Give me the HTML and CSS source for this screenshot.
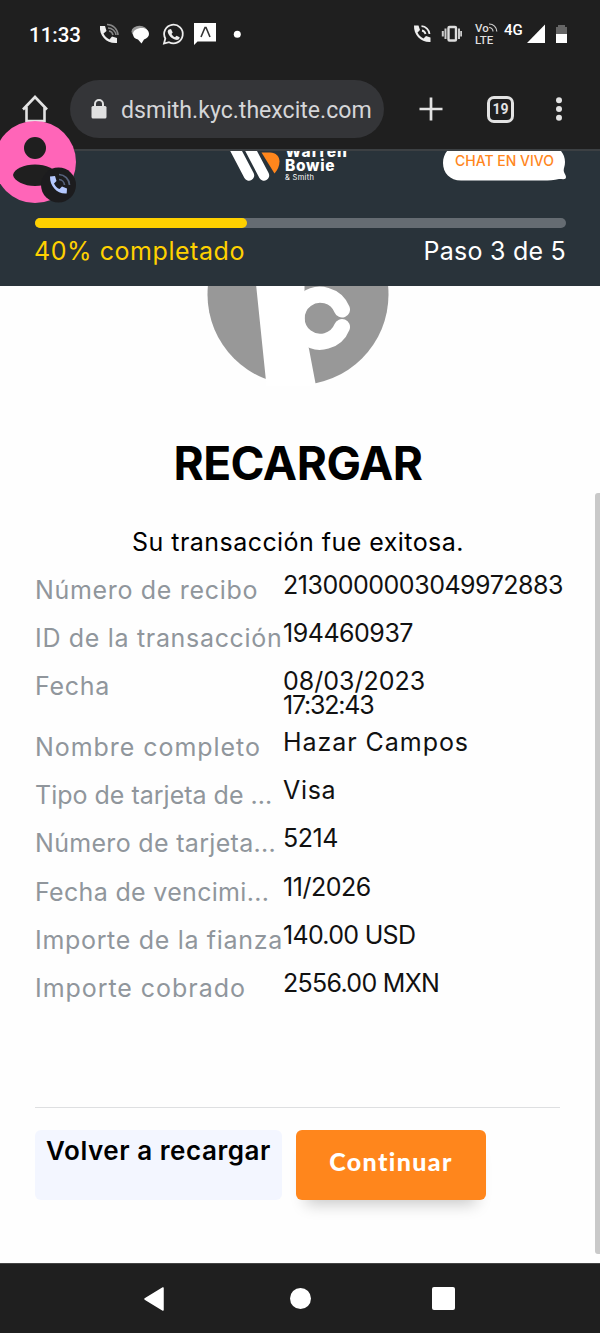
FILE: index.html
```html
<!DOCTYPE html>
<html lang="es">

<head>
    <meta charset="UTF-8">
    <meta name="viewport" content="width=device-width, initial-scale=1.0">
    <title>Recargar</title>
    <link rel="stylesheet" href="styles.css">
</head>

<body>
    <div class="status-bar">
        <span class="clock">11:33</span>
        <svg class="notifications" width="150" height="26" viewBox="98 21 150 26">
            <path d="M100 26h5l1.5 5-3 2.500c1.500 3 3 4.500 6 6l2.500-3 5 1.500v5c-10 1-18-7-17-17z" fill="#eee" />
            <path d="M109 31a5 5 0 0 1 4 4M108 28a8 8 0 0 1 8 7M107 24.500a11 11 0 0 1 11 10.500" fill="none" stroke="#888" stroke-width="1.600" />
            <ellipse cx="139.500" cy="31.500" rx="8" ry="5.800" fill="#999" />
            <path d="M142 28c4 0 7 2.500 7 6 0 2.500-2 4.500-5 5.500l-2.500 4-3.500-4c-3-.5-5-2.500-5-5.500 0-3.500 4-6 9-6z" fill="#fff" />
            <path d="M164 43.500l1.300-5a9.300 9.300 0 1 1 3.700 3.700z" fill="none" stroke="#eee" stroke-width="1.800" />
            <path d="M169 29.500l2-.5 1.700 3.500-1.200 1.500c1 1.700 2 2.500 3.500 3.200l1.500-1.500 3.200 1.600c0 2-2 3-4 2.500-4-1-7.500-4.500-8-8 0-1 .5-2 1.300-2.300z" fill="#eee" />
            <path d="M194 23h22v18.500h-18.500L194 45z" fill="#fff" />
            <path d="M201 37l4-9.500h1l4 9.500" fill="none" stroke="#333" stroke-width="1.600" />
            <circle cx="237.300" cy="34.300" r="3.500" fill="#fff" />
        </svg>
        <div class="signals">
            <svg width="50" height="24" viewBox="412 22 50 24">
                <path d="M414 25.500h4.500l1.500 4.500-2.500 2.500c1.500 3 3 4.500 6 6l2.500-2.500 4.500 1.500v4.500c-9.500.5-17-7-16.500-16.500z" fill="#eee" />
                <path d="M422 30.500a4.500 4.500 0 0 1 3.500 3.500M421.500 26.200a8.500 8.500 0 0 1 8 7.800" fill="none" stroke="#eee" stroke-width="1.800" />
                <rect x="448.500" y="27" width="7.500" height="13.500" rx="1" fill="none" stroke="#ddd" stroke-width="2.400" />
                <path d="M445.500 28.500v10.500M442.800 31v5.500M459 28.500v10.500M461.200 31v5.500" stroke="#ccc" stroke-width="2" />
            </svg>
            <span class="volte"><span>Vo</span><span>LTE</span>
                <svg width="9" height="9" viewBox="0 0 9 9"><path d="M0 4.500a4 4 0 0 1 4 4M0 1a7.500 7.500 0 0 1 7.800 7.500" fill="none" stroke="#ccc" stroke-width="1.200" /></svg>
            </span>
            <span class="network">4G</span>
            <svg width="42" height="20" viewBox="526 24 42 20">
                <path d="M545 24.500V43h-18z" fill="#fff" />
                <path d="M556 27h2v-2h7v2h2v7h-11z" fill="#666" />
                <path d="M556 34h11v9h-11z" fill="#fff" />
            </svg>
        </div>
    </div>

    <div class="browser-bar">
        <svg class="home" width="28" height="28" viewBox="0 0 28 28">
            <path d="M2 14.500L14 2l12 12.500M5.500 12v14h18V12" fill="none" stroke="#e3e3e3" stroke-width="2.600" />
        </svg>
        <div class="url">
            <svg width="16" height="20" viewBox="0 0 16 20">
                <path d="M4 8V5a4 4 0 0 1 8 0v3" fill="none" stroke="#e0e0e0" stroke-width="2" />
                <rect x=".5" y="7" width="15" height="12.500" rx="1.500" fill="#e0e0e0" />
            </svg>
            <span>dsmith.kyc.thexcite.com</span>
        </div>
        <svg class="plus" width="24" height="24" viewBox="0 0 24 24">
            <path d="M12 .5v23M.5 12h23" stroke="#e3e3e3" stroke-width="2.700" />
        </svg>
        <span class="tabs">19</span>
        <svg class="dots" width="6" height="24" viewBox="0 0 6 24" fill="#e3e3e3">
            <circle cx="3" cy="3.200" r="3" />
            <circle cx="3" cy="12" r="3" />
            <circle cx="3" cy="20.800" r="3" />
        </svg>
    </div>

    <header>
        <div class="brand-row">
            <div class="brand">
                <svg width="51" height="31" viewBox="230 151 51 31">
                    <path d="M261.500 152.500h8.500c6 0 9.500 4 9.500 9 0 4.500-2 8.500-5 12z" fill="#ff861c" />
                    <path d="M233.500 146l15.500 29.500M248.500 146l15.500 29.500" stroke="#fff" stroke-width="10.400" stroke-linecap="round" />
                </svg>
                <div class="brand-name">
                    <b>Warren</b>
                    <b>Bowie</b>
                    <small>&amp; Smith</small>
                </div>
            </div>
            <a class="chat" href="#">
                <svg width="124" height="36" viewBox="0 0 124 36">
                    <path d="M17 0h88c10 0 17 8 17 17 0 5-2 7-1 10 .5 2 2 3 2 5 0 3-3 2-7 2-5 1-10 1.500-16 1.500H18C7 35.500 0 28 0 18S7 0 17 0z" fill="#fff" />
                </svg>
                <span>CHAT EN VIVO</span>
            </a>
        </div>
        <div class="progress">
            <div class="progress-value" style="width: 40%"></div>
        </div>
        <div class="steps">
            <span class="percent">40% completado</span>
            <span class="step">Paso 3 de 5</span>
        </div>
    </header>

    <main>
        <svg class="method-logo" width="182" height="100" viewBox="207 286 182 100">
            <circle cx="298" cy="294.500" r="90.500" fill="#989898" />
            <path d="M256 284h48.500v46l4.500 19 7 37h-49.500z" fill="#fff" />
            <path d="M342 309.500a23.500 23.500 0 1 0 0 17.500" fill="none" stroke="#fff" stroke-width="16" stroke-linecap="round" />
        </svg>
        <h1>RECARGAR</h1>
        <p class="message">Su transacción fue exitosa.</p>
        <dl class="details">
            <div class="row"><dt class="wide">Número de recibo</dt><dd class="digits">2130000003049972883</dd></div>
            <div class="row"><dt class="wide">ID de la transacción</dt><dd class="digits">194460937</dd></div>
            <div class="row tall"><dt class="wide">Fecha</dt><dd>08/03/2023<br><span class="time">17:32:43</span></dd></div>
            <div class="row"><dt class="wider">Nombre completo</dt><dd class="wider">Hazar Campos</dd></div>
            <div class="row"><dt>Tipo de tarjeta de ...</dt><dd class="wide">Visa</dd></div>
            <div class="row"><dt class="cut">Número de tarjeta...</dt><dd class="digits">5214</dd></div>
            <div class="row"><dt class="cut">Fecha de vencimi...</dt><dd class="digits">11/2026</dd></div>
            <div class="row"><dt class="wide">Importe de la fianza</dt><dd class="amount">140.00 USD</dd></div>
            <div class="row"><dt class="wider">Importe cobrado</dt><dd class="amount">2556.00 MXN</dd></div>
        </dl>
        <div class="actions">
            <button class="back">Volver a recargar</button>
            <button class="continue">Continuar</button>
        </div>
    </main>

    <nav class="system-nav">
        <svg width="22" height="26" viewBox="0 0 22 26"><path d="M20 2v22L2 13z" fill="#fff" stroke="#fff" stroke-width="1.500" stroke-linejoin="round" /></svg>
        <span class="nav-home"></span>
        <span class="nav-recent"></span>
    </nav>

    <!-- floating caller bubble -->
    <svg class="caller" width="80" height="86" viewBox="0 120 80 86">
        <circle cx="35" cy="162" r="41" fill="#ff65b8" />
        <circle cx="35" cy="148" r="11" fill="#1f1f1f" />
        <path d="M13 175c1-6 11-10.500 22-10.500S56 169 57 175c-1 6-11 11-22 11s-21-5-22-11z" fill="#1f1f1f" />
        <circle cx="58.500" cy="185" r="17.500" fill="#1c1c1e" />
        <path d="M50 176.500l5-.5 1.500 5-2.500 2.500c1.500 3 3 4.500 5.500 5.500l2.500-2.500 5 2-.3 5c-9 1-17-7-16.700-17z" fill="#b5c9ff" />
        <path d="M59 179.500a6 6 0 0 1 5.500 5.500M59 174.500a11 11 0 0 1 10.500 10.500" fill="none" stroke="#56627c" stroke-width="1.700" />
    </svg>
    <div class="scrollbar"></div>
</body>

</html>
```

FILE: styles.css
```css
:root {
    --BodyFont: Inter, "Open Sans", sans-serif;
    --SystemFont: Roboto, sans-serif;
    --Dark: #1f1f1f;
    --Header: #29333a;
    --Orange: #ff861c;
    --Yellow: #ffd100;
}

* {
    box-sizing: border-box;
}

body {
    position: relative;
    display: flex;
    flex-direction: column;
    width: 600px;
    height: 1333px;
    margin: 0;
    overflow: hidden;
    font-family: var(--BodyFont);
    background-color: #fefefe;
}

svg {
    display: block;
    flex: none;
}

.status-bar {
    display: flex;
    height: 68px;
    padding: 21px 32px 0 29px;
    background-color: var(--Dark);
    color: #fff;
    font-family: var(--SystemFont);
}

.clock {
    width: 69px;
    font-size: 20.5px;
    font-weight: 500;
    line-height: 29px;
}

.signals {
    display: flex;
    margin-left: 164px;
    padding-top: 1px;
}

.volte {
    position: relative;
    display: flex;
    flex-direction: column;
    width: 29px;
    margin-left: 13px;
    font-size: 11.5px;
    font-weight: 500;
    line-height: 12px;
    color: #ddd;
}

.volte svg {
    position: absolute;
    left: 14px;
    top: 1px;
}

.network {
    width: 22px;
    font-size: 15px;
    font-weight: 500;
    line-height: 17px;
}

.signals > svg:last-child {
    margin-top: 2px;
}

.browser-bar {
    display: flex;
    align-items: center;
    height: 83px;
    padding: 0 38px 3px 21px;
    background-color: var(--Dark);
    border-bottom: 2px solid #3c4043;
}

.url {
    display: flex;
    align-items: center;
    width: 314px;
    height: 58px;
    margin: 4px 35px 0 21px;
    padding-left: 21px;
    border-radius: 29px;
    background-color: #343538;
    color: #d5d6d8;
    font-family: var(--SystemFont);
    font-size: 23.1px;
}

.url span {
    margin-left: 14px;
    padding-top: 3px;
}

.home,
.plus,
.dots,
.tabs {
    margin-top: 4px;
}

.tabs {
    width: 27px;
    height: 27px;
    margin-left: 44px;
    border: 3px solid #e3e3e3;
    border-radius: 7px;
    color: #e3e3e3;
    font-family: var(--SystemFont);
    font-size: 14px;
    font-weight: 700;
    line-height: 21px;
    text-align: center;
}

.dots {
    margin-left: 42px;
}

header {
    height: 135px;
    padding: 0 34px 0 35px;
    background-color: var(--Header);
}

.brand-row {
    display: flex;
    justify-content: space-between;
    height: 67px;
    padding-left: 195px;
    overflow: hidden;
}

.brand {
    display: flex;
}

.brand-name {
    display: flex;
    flex-direction: column;
    margin: -6px 0 0 4px;
    color: #fff;
    font-size: 15.5px;
    line-height: 14px;
    letter-spacing: 0.7px;
}

.brand-name b {
    font-weight: 800;
}

.brand-name b:first-child {
    letter-spacing: 1.1px;
}

.brand-name small {
    font-size: 7.5px;
    line-height: 9px;
    letter-spacing: 0.3px;
}

.chat {
    position: relative;
    width: 123px;
    height: 36px;
    margin-top: -6px;
    color: var(--Orange);
    font-size: 14px;
    font-weight: 500;
    line-height: 32px;
    text-align: center;
    text-decoration: none;
}

.chat svg {
    position: absolute;
    left: 0;
    top: 0;
}

.chat span {
    position: relative;
}

.progress {
    height: 10px;
    border-radius: 5px;
    background-color: #656c72;
}

.progress-value {
    height: 100%;
    border-radius: 5px;
    background-color: var(--Yellow);
}

.steps {
    display: flex;
    justify-content: space-between;
    padding-top: 7px;
    font-size: 25px;
    line-height: 32px;
    color: #fff;
}

.percent {
    margin-left: -1px;
    color: var(--Yellow);
    letter-spacing: 0.55px;
}

.step {
    letter-spacing: 0.25px;
}

main {
    flex: 1;
    padding: 0 34px 0 35px;
}

.method-logo {
    margin-left: 172px;
}

h1 {
    margin: 47px 5px 0 0;
    font-size: 46px;
    font-weight: 700;
    line-height: 60px;
    letter-spacing: -0.5px;
    text-align: center;
}

.message {
    margin: 32px 5px 0 0;
    font-size: 25px;
    line-height: 34px;
    letter-spacing: 0.45px;
    text-align: center;
}

.details {
    margin: 13.6px 0 0;
    font-size: 25px;
    line-height: 24px;
    white-space: nowrap;
}

.row {
    display: flex;
    height: 48.2px;
}

.row.tall {
    height: 61px;
}

.row dt {
    flex: none;
    width: 248px;
    padding-top: 5px;
    color: #90969c;
}

.row dd {
    margin: 0;
    color: #111;
}

.row .wide {
    letter-spacing: 0.68px;
}

.row .wider {
    letter-spacing: 0.95px;
}

.row .cut {
    letter-spacing: 0.32px;
}

.row .digits {
    letter-spacing: -0.48px;
}

.row .amount {
    letter-spacing: -0.7px;
}

.time {
    letter-spacing: -1.2px;
}

.actions {
    display: flex;
    width: 525px;
    margin-top: 88.4px;
    padding-top: 22px;
    border-top: 1px solid #dedfe1;
}

.actions button {
    height: 70px;
    border: none;
    border-radius: 6px;
    font-family: var(--BodyFont);
}

.actions .back {
    width: 247px;
    padding: 0 0 29px;
    background-color: #f3f6ff;
    color: #000;
    font-size: 26px;
    font-weight: 600;
    letter-spacing: 0.55px;
}

.actions .continue {
    width: 190px;
    margin-left: 14px;
    padding: 0 0 9px;
    background-color: var(--Orange);
    box-shadow: 0 14px 16px -10px rgba(0, 0, 0, 0.22);
    color: #fff;
    font-family: Lato, sans-serif;
    font-size: 25px;
    font-weight: 900;
    letter-spacing: 1.4px;
}

.system-nav {
    display: flex;
    align-items: center;
    height: 70px;
    padding-left: 143px;
    background-color: var(--Dark);
    border-top: 1px solid #444;
}

.nav-home {
    width: 21px;
    height: 21px;
    margin-left: 125px;
    border-radius: 50%;
    background-color: #fff;
}

.nav-recent {
    width: 23px;
    height: 23px;
    margin-left: 121px;
    border-radius: 2px;
    background-color: #fff;
}

.caller {
    position: absolute;
    left: 0;
    top: 120px;
}

.scrollbar {
    position: absolute;
    top: 493px;
    right: 0;
    width: 5px;
    height: 761px;
    border-radius: 3px 0 0 3px;
    background-color: #c9c9c9;
}
```
